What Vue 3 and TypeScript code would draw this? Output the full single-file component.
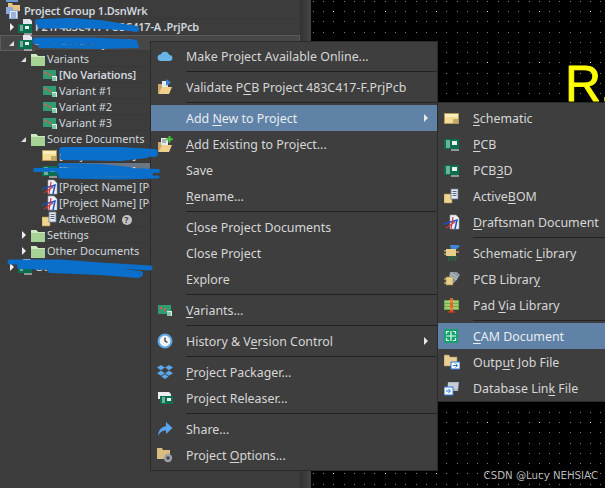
<template>
  <div class="page">
    <svg class="defs" width="0" height="0">
      <symbol id="i-pcb" viewBox="0 0 16 16">
        <rect x="0" y="3" width="15" height="10" fill="#0b6e50" />
        <path d="M2 5h4M2 7h4M2 9h4M2 11h4" stroke="#d8efe2" />
        <rect x="8" y="5" width="5" height="4" fill="#e8f3ee" />
        <path d="M8 13v2M10 13v2M12 13v2M14 13v2" stroke="#e8f3ee" />
      </symbol>
      <symbol id="i-prj" viewBox="0 0 16 16">
        <path d="M5 0h7l2 2v5H5z" fill="#e4e8ee" />
        <rect x="0" y="5" width="14" height="9" fill="#0b6e50" />
        <path d="M2 7h3M2 9h3M2 11h3" stroke="#d8efe2" />
        <rect x="7" y="7" width="4" height="3" fill="#e8f3ee" />
        <path d="M7 14v2M9 14v2M11 14v2M13 14v2" stroke="#e8f3ee" />
      </symbol>
      <symbol id="i-variant" viewBox="0 0 16 16">
        <rect x="1" y="3" width="13" height="9" fill="#2f9c73" />
        <path d="M3 5l2 2m0-2l-2 2M7 7l2 2m0-2l-2 2" stroke="#e0564e" stroke-width="1.2" />
        <rect x="10" y="9" width="5" height="5" fill="#dff2e6" />
        <path d="M11 10v4M13 10v4" stroke="#2f9c73" />
      </symbol>
      <symbol id="i-folder" viewBox="0 0 16 16">
        <path d="M1 3h5l2 2h7v10H1z" fill="#a7d295" />
        <path d="M1 3h5l2 2h7v1H1z" fill="#cfe8c0" />
      </symbol>
      <symbol id="i-group" viewBox="0 0 16 16">
        <path d="M3 0h4l1 2h7v6H3z" fill="#e5c381" />
        <path d="M1 4h6l1 1v2h5v9H4v-5H1z" fill="#8fa9d8" />
        <path d="M5 8h7v7H5z" fill="#dfe7f5" />
        <path d="M6 10h5M6 12h5M6 14h5" stroke="#5f7db5" />
      </symbol>
      <symbol id="i-sch" viewBox="0 0 16 16">
        <rect x="0.5" y="3.5" width="14" height="10" fill="#f3dc94" stroke="#b49a58" />
        <path d="M1 4h13v3H1z" fill="#fbeebd" />
        <path d="M9 10h5M9 12h5" stroke="#8e7a45" />
      </symbol>
      <symbol id="i-bom" viewBox="0 0 16 16">
        <path d="M0 6h8v9H0z" fill="#f0d68c" stroke="#a68e52" stroke-width="0.6" />
        <rect x="7" y="1" width="7" height="10" fill="#e6ebf2" stroke="#6c7a90" stroke-width="0.8" />
        <path d="M8.500 3.500h4M8.500 5.500h4M8.500 7.500h4" stroke="#53647e" />
      </symbol>
      <symbol id="i-draft" viewBox="0 0 16 16">
        <path d="M6 1h6l3 3v11H6z" fill="#eef1f6" stroke="#97a3b5" stroke-width="0.6" />
        <path d="M0 10l13-4-2 9" fill="none" stroke="#1e4fc4" stroke-width="1.500" />
        <path d="M2 14l9-6M9 3l-2 12" fill="none" stroke="#d83232" stroke-width="1.200" />
      </symbol>
      <symbol id="i-cloud" viewBox="0 0 16 16">
        <path d="M4 13a3.200 3.200 0 0 1-.4-6.400A4.600 4.600 0 0 1 12.300 7 3 3 0 0 1 12.500 13z" fill="#69b4e6" />
      </symbol>
      <symbol id="i-validate" viewBox="0 0 16 16">
        <path d="M1 5h5v9H1z" fill="#c9a766" />
        <path d="M2 14l3-6h10l-3 7H1z" fill="#f1cf8d" />
        <path d="M5 2h6v6H5z" fill="#e5ebf2" />
        <path d="M9 0l5 3.500L9 7z" fill="#3d83d8" />
      </symbol>
      <symbol id="i-add" viewBox="0 0 16 16">
        <path d="M1 6h5v9H1z" fill="#c9a766" />
        <path d="M2 15l3-6h10l-3 7H1z" fill="#f1cf8d" />
        <path d="M4 2h7v7H4z" fill="#e5ebf2" />
        <path d="M5 4h4M5 6h4" stroke="#777" />
        <path d="M12.500 0v6.500M9.200 3.200h6.600" stroke="#41c43c" stroke-width="2" />
      </symbol>
      <symbol id="i-clock" viewBox="0 0 16 16">
        <circle cx="8" cy="8" r="7.500" fill="#5da6e3" />
        <circle cx="8" cy="8" r="5.400" fill="#f2f4f6" />
        <path d="M8 4.500V8l2.500 1.500" stroke="#444" stroke-width="1.400" fill="none" />
      </symbol>
      <symbol id="i-dropbox" viewBox="0 0 16 16">
        <path d="M4 1l4 2.600L4 6.200 0 3.600zM12 1l4 2.600-4 2.600-4-2.600zM4 6.600l4 2.600-4 2.600-4-2.600zM12 6.600l4 2.600-4 2.600-4-2.600zM8 10.200l3.600 2.300L8 15l-3.600-2.500z" fill="#5aa7ea" />
      </symbol>
      <symbol id="i-release" viewBox="0 0 16 16">
        <path d="M1 2h11l2 2v5H1z" fill="#e9edf2" />
        <rect x="3" y="6" width="13" height="8" fill="#0b6e50" />
        <path d="M5 8h3M5 10h3M5 12h3" stroke="#d8efe2" />
        <rect x="10" y="8" width="4" height="3" fill="#e8f3ee" />
      </symbol>
      <symbol id="i-share" viewBox="0 0 16 16">
        <path d="M9 1l6.500 6L9 13V9.500C5.500 9.500 3 11 1 15c.3-5.500 3-9.200 8-9.800z" fill="#59a6ee" />
      </symbol>
      <symbol id="i-options" viewBox="0 0 16 16">
        <path d="M0 1h5l1 2h7v9H0z" fill="#d9bd80" />
        <circle cx="11" cy="11" r="4.200" fill="#9aa1a8" />
        <circle cx="11" cy="11" r="1.800" fill="#44484c" />
      </symbol>
      <symbol id="i-schlib" viewBox="0 0 16 16">
        <path d="M6 0h8l2 1-3 3H7z" fill="#3f85d6" />
        <rect x="2" y="4" width="10" height="7" fill="#e7cf8b" />
        <path d="M0 6h2M0 9h2M12 7h3" stroke="#e7cf8b" />
        <path d="M4 12h9M5 13v3M8 13v3M11 13v3" stroke="#1e7a4a" />
      </symbol>
      <symbol id="i-pcblib" viewBox="0 0 16 16">
        <path d="M6 1h7l3 3-6 8H4z" fill="#8d98a3" />
        <path d="M7 2l7 5M6 4l7 5" stroke="#c6ccd2" />
        <rect x="2" y="6" width="7" height="8" fill="#e8cf8c" stroke="#9b8449" stroke-width="0.6" />
        <path d="M0 8h2M0 12h2" stroke="#e8cf8c" />
      </symbol>
      <symbol id="i-padvia" viewBox="0 0 16 16">
        <rect x="0" y="3" width="15" height="10" fill="#6aae48" />
        <path d="M1 5h13M1 8h13M1 11h13" stroke="#e8e2a4" />
        <path d="M7.500 1v14" stroke="#d96a2c" stroke-width="3" />
        <path d="M4 15h7" stroke="#c43b1f" stroke-width="1.500" />
        <path d="M5 3l2.500 2L10 3M5 10l2.500 2 2.500-2" fill="none" stroke="#f0a860" />
      </symbol>
      <symbol id="i-cam" viewBox="0 0 16 16">
        <rect x="0" y="1" width="14" height="14" fill="#10a46c" />
        <path d="M2.500 6V3.500H5M9 3.500h2.500V6M11.500 10v2.500H9M5 12.500H2.500V10" fill="none" stroke="#eaf7f0" stroke-width="1.200" />
        <path d="M7 3v10M2 8h10" stroke="#eaf7f0" stroke-width="1.200" />
      </symbol>
      <symbol id="i-output" viewBox="0 0 16 16">
        <path d="M0 1h5l1 2h7v9H0z" fill="#e9cf95" stroke="#a08a58" stroke-width="0.6" />
        <rect x="7" y="8" width="9" height="7" fill="#f2f6fb" stroke="#2f78d8" />
        <path d="M9 11.500h4M11.500 9.500l2 2-2 2" stroke="#2f78d8" fill="none" />
      </symbol>
      <symbol id="i-db" viewBox="0 0 16 16">
        <path d="M4 2h11l-1 9H3z" fill="#aeb6bf" />
        <path d="M4 4h10M4 6h10M4 8h10" stroke="#dfe4e9" />
        <rect x="0" y="7" width="9" height="8" fill="#f2f6fb" stroke="#2f78d8" />
        <path d="M2 11h4M4.500 9l2 2-2 2" stroke="#2f78d8" fill="none" />
      </symbol>
    </svg>

    <aside class="tree">
      <div class="peek"><span class="peek-icon"></span></div>
      <div
        v-for="row in treeRows"
        :key="row.id"
        class="tree-row"
        :class="[`lv${row.level}`, row.state]"
      >
        <span class="arrow" :class="row.arrow"></span>
        <svg class="tree-icon"><use :href="`#i-${row.icon}`" /></svg>
        <span class="tree-label" :class="{ strong: row.strong }">
          {{ row.label }}
          <span v-if="row.help" class="help">?</span>
        </span>
      </div>
    </aside>
    <div class="gutter"></div>

    <main class="canvas">
      <svg class="grid" viewBox="311 0 294 488" width="294" height="488">
        <path :d="minorDots" fill="#85855a" shape-rendering="crispEdges" />
        <path :d="majorDots" fill="#f2f2f2" shape-rendering="crispEdges" />
        <text x="565" y="101" class="designator">R1</text>
      </svg>
      <span class="watermark">CSDN @Lucy NEHSIAC</span>
    </main>

    <section class="menu main-menu">
      <template v-for="item in mainMenu" :key="item.id">
        <div v-if="item.sep" class="sep"></div>
        <div v-else class="menu-row" :class="{ active: item.active }">
          <span class="menu-icon">
            <svg v-if="item.icon" width="16" height="16"><use :href="`#i-${item.icon}`" /></svg>
          </span>
          <span class="menu-text">{{ item.a }}<u v-if="item.u">{{ item.u }}</u>{{ item.b }}</span>
          <span v-if="item.sub" class="caret"></span>
        </div>
      </template>
    </section>

    <section class="menu sub-menu">
      <template v-for="item in subMenu" :key="item.id">
        <div v-if="item.sep" class="sep"></div>
        <div v-else class="menu-row" :class="{ active: item.active }">
          <span class="menu-icon">
            <svg v-if="item.icon" width="16" height="16"><use :href="`#i-${item.icon}`" /></svg>
          </span>
          <span class="menu-text">{{ item.a }}<u v-if="item.u">{{ item.u }}</u>{{ item.b }}</span>
        </div>
      </template>
    </section>

    <svg class="scribbles" width="605" height="488">
      <g fill="none" stroke="#0a6fcb" stroke-linecap="round" stroke-linejoin="round">
        <path d="M38 22L70 21L100 23L136 29" stroke-width="6" />
        <path d="M40 26L90 26L132 28" stroke-width="5" />
        <path d="M36 41L90 41L134 43" stroke-width="7" />
        <path d="M40 46L100 47L137 46" stroke-width="4" />
        <path d="M63 151L120 151L154 153" stroke-width="8" />
        <path d="M63 157L120 158L146 155" stroke-width="6" />
        <path d="M35 170L100 169L158 171" stroke-width="4" />
        <path d="M60 173L110 173L150 174" stroke-width="6" />
        <path d="M60 177L120 178L158 177" stroke-width="3" />
        <path d="M60 165L100 166L130 169" stroke-width="4" />
        <path d="M10 262L60 262L100 265L150 268" stroke-width="5" />
        <path d="M20 266L90 268L140 274" stroke-width="6" />
        <path d="M50 271L100 273L138 276" stroke-width="4" />
      </g>
    </svg>
  </div>
</template>

<script setup lang="ts">
  import { computed } from 'vue';

  interface MenuItem {
    id: number;
    sep?: boolean;
    icon?: string;
    a?: string;
    u?: string;
    b?: string;
    active?: boolean;
    sub?: boolean;
  }

  const treeRows = [
    { id: 1, level: 'g', icon: 'group', arrow: '', label: 'Project Group 1.DsnWrk', strong: true },
    { id: 2, level: 0, icon: 'prj', arrow: 'closed', label: 'P21F483C417 FU3C417-A .PrjPcb', strong: true },
    { id: 3, level: 0, icon: 'prj', arrow: 'open', label: '483C417-F.PrjPcb *', state: 'focused' },
    { id: 4, level: 1, icon: 'folder', arrow: 'open', label: 'Variants' },
    { id: 5, level: 2, icon: 'variant', label: '[No Variations]', strong: true },
    { id: 6, level: 2, icon: 'variant', label: 'Variant #1' },
    { id: 7, level: 2, icon: 'variant', label: 'Variant #2' },
    { id: 8, level: 2, icon: 'variant', label: 'Variant #3' },
    { id: 9, level: 1, icon: 'folder', arrow: 'open', label: 'Source Documents' },
    { id: 10, level: 2, icon: 'sch', label: '[Project Name]' },
    { id: 11, level: 2, icon: 'pcb', label: '[Project Name]', state: 'selected' },
    { id: 12, level: 2, icon: 'draft', label: '[Project Name] [PC' },
    { id: 13, level: 2, icon: 'draft', label: '[Project Name] [PC' },
    { id: 14, level: 2, icon: 'bom', label: 'ActiveBOM', help: true },
    { id: 15, level: 1, icon: 'folder', arrow: 'closed', label: 'Settings' },
    { id: 16, level: 1, icon: 'folder', arrow: 'closed', label: 'Other Documents' },
    { id: 17, level: 0, icon: 'prj', arrow: 'closed', label: 'Other' },
  ];

  const mainMenu: MenuItem[] = [
    { id: 1, icon: 'cloud', a: 'Make Project Available Online...' },
    { id: 2, sep: true },
    { id: 3, icon: 'validate', a: 'Validate P', u: 'C', b: 'B Project 483C417-F.PrjPcb' },
    { id: 4, sep: true },
    { id: 5, a: 'Add ', u: 'N', b: 'ew to Project', active: true, sub: true },
    { id: 6, icon: 'add', u: 'A', b: 'dd Existing to Project...' },
    { id: 7, a: 'Save' },
    { id: 8, u: 'R', b: 'ename...' },
    { id: 9, sep: true },
    { id: 10, a: 'C', u: 'l', b: 'ose Project Documents' },
    { id: 11, a: 'Close Project' },
    { id: 12, a: 'Explore' },
    { id: 13, sep: true },
    { id: 14, icon: 'variant', u: 'V', b: 'ariants...' },
    { id: 15, sep: true },
    { id: 16, icon: 'clock', a: 'History & V', u: 'e', b: 'rsion Control', sub: true },
    { id: 17, sep: true },
    { id: 18, icon: 'dropbox', u: 'P', b: 'roject Packager...' },
    { id: 19, icon: 'release', a: 'Project Releaser...' },
    { id: 20, sep: true },
    { id: 21, icon: 'share', a: 'Share...' },
    { id: 22, icon: 'options', a: 'Project ', u: 'O', b: 'ptions...' },
  ];

  const subMenu: MenuItem[] = [
    { id: 1, icon: 'sch', u: 'S', b: 'chematic' },
    { id: 2, icon: 'pcb', u: 'P', b: 'CB' },
    { id: 3, icon: 'pcb', a: 'PCB', u: '3', b: 'D' },
    { id: 4, icon: 'bom', a: 'Active', u: 'B', b: 'OM' },
    { id: 5, icon: 'draft', u: 'D', b: 'raftsman Document' },
    { id: 6, sep: true },
    { id: 7, icon: 'schlib', a: 'Schematic ', u: 'L', b: 'ibrary' },
    { id: 8, icon: 'pcblib', a: 'PCB Librar', u: 'y' },
    { id: 9, icon: 'padvia', a: 'Pad ', u: 'V', b: 'ia Library' },
    { id: 10, sep: true },
    { id: 11, icon: 'cam', u: 'C', b: 'AM Document', active: true },
    { id: 12, icon: 'output', a: 'Outp', u: 'u', b: 't Job File' },
    { id: 13, icon: 'db', a: 'Database Lin', u: 'k', b: ' File' },
  ];

  // grid repeats every 10.275px, every fifth dot is the bright one
  const step = 10.275;
  const originX = 333.3;
  const originY = 11;

  const dots = (major: boolean) => {
    let d = '';
    for (let i = -2; i < 27; i++) {
      for (let j = -1; j < 47; j++) {
        const bright = i % 5 === 0 && j % 5 === 0;
        if (bright !== major) continue;
        d += `M${Math.round(originX + i * step)} ${Math.round(originY + j * step)}h1v1h-1z`;
      }
    }
    return d;
  };

  const minorDots = computed(() => dots(false));
  const majorDots = computed(() => dots(true));
</script>

<style>
  html,
  body {
    background: #000;
  }
</style>

<style scoped>
  .page {
    position: relative;
    display: flex;
    width: 605px;
    height: 488px;
    overflow: hidden;
    background: #000;
    font-family: 'Noto Sans', 'Open Sans', sans-serif;
  }

  .defs {
    position: absolute;
  }

  .tree {
    width: 300px;
    flex: none;
    background: #3c3c3c;
    color: #cfd6dd;
    font-size: 11px;
  }

  .gutter {
    width: 11px;
    flex: none;
    background: linear-gradient(90deg, #333 0, #444 100%);
  }

  .peek {
    height: 3px;
    overflow: hidden;
  }

  .peek-icon {
    display: block;
    width: 12px;
    height: 2px;
    margin-left: 6px;
    background: #6d9bcf;
  }

  .tree-row {
    display: flex;
    align-items: center;
    height: 16px;
    white-space: nowrap;
  }

  .tree-row.lvg {
    padding-left: 5px;
  }

  .tree-row.lvg .arrow {
    display: none;
  }

  .tree-row.lvg .tree-label {
    margin-left: 3px;
  }

  .tree-row.lv0 {
    padding-left: 6px;
  }

  .tree-row.lv1 {
    padding-left: 18px;
  }

  .tree-row.lv2 {
    padding-left: 30px;
  }

  .tree-row.focused {
    background: #474747;
    box-shadow: inset 0 0 0 1px #5c5c5c;
  }

  .tree-row.selected .tree-label {
    background: #6c7682;
  }

  .arrow {
    position: relative;
    width: 12px;
    height: 16px;
    flex: none;
  }

  .arrow.closed::before {
    content: '';
    position: absolute;
    left: 4px;
    top: 4px;
    border-left: 4px solid #eee;
    border-top: 4px solid transparent;
    border-bottom: 4px solid transparent;
  }

  .arrow.open::before {
    content: '';
    position: absolute;
    left: 3px;
    top: 6px;
    border-right: 5px solid #ddd;
    border-top: 5px solid transparent;
  }

  .tree-icon {
    width: 16px;
    height: 16px;
    flex: none;
  }

  .tree-label {
    flex: 1;
    height: 16px;
    margin-left: 1px;
    line-height: 15px;
    border-bottom: 1px solid #383838;
    box-sizing: border-box;
  }

  .tree-label.strong {
    font-weight: 600;
    letter-spacing: -0.2px;
  }

  .help {
    display: inline-block;
    width: 10px;
    height: 10px;
    margin-left: 3px;
    border-radius: 50%;
    background: #c4c4c4;
    color: #3c3c3c;
    font-size: 9px;
    font-weight: 700;
    line-height: 10px;
    text-align: center;
    vertical-align: 0;
  }

  .canvas {
    position: relative;
    flex: 1;
  }

  .grid {
    display: block;
  }

  .designator {
    font-family: 'Liberation Sans', sans-serif;
    font-size: 50px;
    fill: #ffff00;
    stroke: #ffff00;
    stroke-width: 0.8;
    stroke-linejoin: round;
  }

  .watermark {
    position: absolute;
    right: 7px;
    bottom: 4px;
    color: #b9b9b9;
    font-family: 'DejaVu Sans', sans-serif;
    font-size: 10.2px;
    line-height: 16px;
    white-space: nowrap;
  }

  .menu {
    position: absolute;
    box-sizing: border-box;
    background: #3e3e3e;
    border: 1px solid #2b2b2b;
    color: #d6d6d6;
    font-size: 12.4px;
  }

  .main-menu {
    left: 150px;
    top: 41px;
    width: 288px;
    height: 430px;
    padding-top: 1px;
  }

  .sub-menu {
    left: 437px;
    top: 102px;
    width: 168px;
    height: 300px;
    border-right: 0;
    padding-top: 2px;
  }

  .menu-row {
    display: flex;
    align-items: center;
    height: 26px;
    padding-right: 8px;
  }

  .menu-row.active {
    background: #5f82a6;
    color: #e9edf1;
  }

  .menu-icon {
    display: flex;
    justify-content: center;
    align-items: center;
    width: 35px;
    padding-right: 8px;
    box-sizing: border-box;
    flex: none;
  }

  .menu-text {
    flex: 1;
    white-space: nowrap;
  }

  .menu-text u {
    text-underline-offset: 2px;
  }

  .caret {
    margin-right: 1px;
    border-left: 4px solid #e8e8e8;
    border-top: 4px solid transparent;
    border-bottom: 4px solid transparent;
  }

  .sep {
    height: 5px;
    box-sizing: border-box;
    margin-left: 35px;
    padding-top: 2px;
  }

  .sep::after {
    content: '';
    display: block;
    height: 1px;
    background: #232323;
  }

  .scribbles {
    position: absolute;
    left: 0;
    top: 0;
    pointer-events: none;
  }
</style>
